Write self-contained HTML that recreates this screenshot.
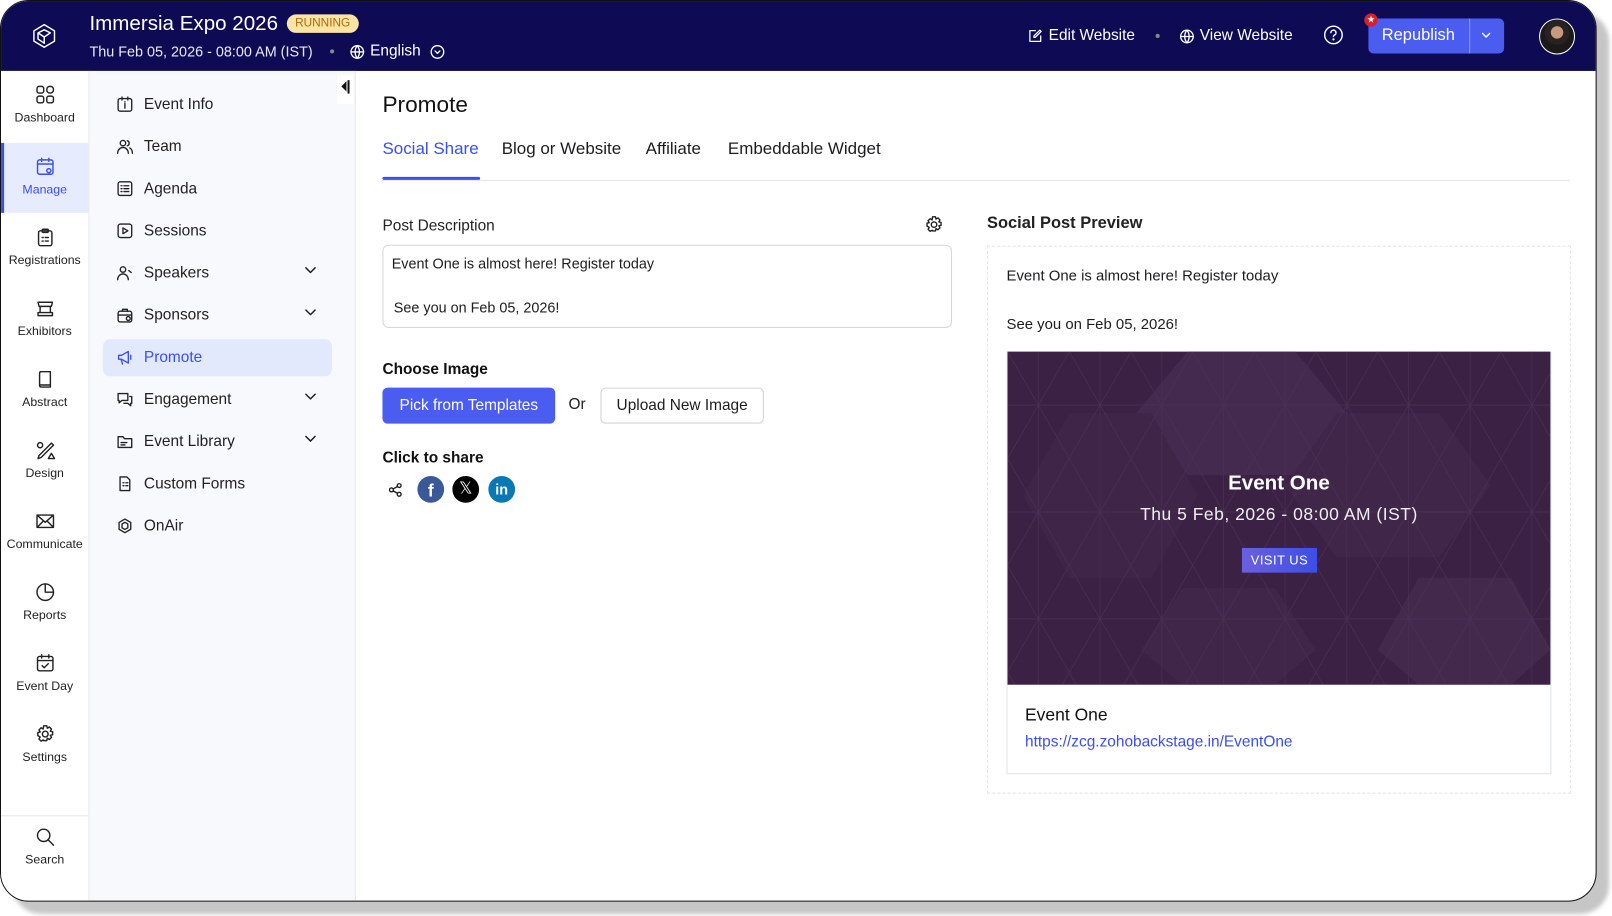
<!DOCTYPE html>
<html><head><meta charset="utf-8"><style>
*{box-sizing:border-box;margin:0;padding:0}
body{width:1612px;height:916px;background:#fff;overflow:hidden;font-family:"Liberation Sans",sans-serif;color:#1d1d1f}
#s{position:absolute;left:0;top:0;width:1568px;height:891px;transform:scale(1.0281);transform-origin:0 0}
.shadow{position:absolute;left:12px;top:12px;width:1553px;height:877px;background:#c6c6c6;border-radius:28px;filter:blur(2px)}
.win{position:absolute;left:0;top:0;width:1553px;height:877px;background:#fff;border:1.5px solid #111;border-radius:28px;overflow:hidden}
.hdr{position:absolute;left:0;top:0;right:0;height:68px;background:#0e0b54;color:#fff}
.a{position:absolute}
.rail{position:absolute;left:0;top:68px;width:86px;bottom:0;background:#fff;border-right:1px solid #e8e9ee}
.ri{position:absolute;left:0;width:85px;height:69px;text-align:center;font-size:12px;color:#222}
.ri svg{display:block;margin:13px auto 5px}
.sub{position:absolute;left:86px;top:68px;width:259px;bottom:0;background:#f8f9fc;border-right:1px solid #e4e6eb}
.si{position:absolute;left:26px;font-size:15px;color:#222;display:flex;align-items:center;gap:10px}
.si svg{width:17px;height:17px}
.chev{position:absolute;left:209px}
svg{fill:none;stroke:currentColor;stroke-width:1.4;stroke-linecap:round;stroke-linejoin:round}
.tab{position:absolute;top:135px;font-size:16.5px}
</style></head><body><div id="s">
<div class="shadow"></div>
<div class="win">
<div class="hdr">
 <svg class="a" style="left:28px;top:20px" width="28" height="28" viewBox="0 0 28 28" stroke="#fff" stroke-width="2"><path d="M14 3 24 9v10l-10 6-10-6V9z"/><path d="M8 11l6-3 6 3-6 4-6-4v6l6 4"/><path d="M14 15v6"/></svg>
 <div class="a" style="left:86px;top:11px;font-size:20px">Immersia Expo 2026</div>
 <div class="a" style="left:278px;top:13px;background:#fbe4a4;color:#b06a0a;font-size:11.5px;padding:3px 8px;border-radius:10px">RUNNING</div>
 <div class="a" style="left:86px;top:41px;font-size:14px;color:#e8e8f4">Thu Feb 05, 2026 - 08:00 AM (IST)</div>
 <div class="a" style="left:320px;top:47px;width:4px;height:4px;border-radius:2px;background:#888"></div>
 <svg class="a" style="left:339px;top:42px" width="15" height="15" viewBox="0 0 16 16" stroke="#fff"><circle cx="8" cy="8" r="6.5"/><path d="M1.5 8h13M8 1.5c-3 3.5-3 9.5 0 13M8 1.5c3 3.5 3 9.5 0 13"/></svg>
 <div class="a" style="left:359px;top:40px;font-size:15px">English</div>
 <svg class="a" style="left:417px;top:42px" width="15" height="15" viewBox="0 0 16 16" stroke="#fff"><circle cx="8" cy="8" r="6.5"/><path d="M5.5 7l2.5 2.5L10.5 7"/></svg>
 <svg class="a" style="left:999px;top:27px" width="14" height="14" viewBox="0 0 16 16" stroke="#fff"><path d="M8 2H2v12h12V8"/><path d="M13 1.5l1.5 1.5L8 9.5H6.5V8z"/></svg>
 <div class="a" style="left:1019px;top:25px;font-size:15px">Edit Website</div>
 <div class="a" style="left:1123px;top:32px;width:4px;height:4px;border-radius:2px;background:#888"></div>
 <svg class="a" style="left:1146px;top:27px" width="15" height="15" viewBox="0 0 16 16" stroke="#fff"><circle cx="8" cy="8" r="6.5"/><path d="M1.5 8h13M8 1.5c-3 3.5-3 9.5 0 13M8 1.5c3 3.5 3 9.5 0 13"/></svg>
 <div class="a" style="left:1166px;top:25px;font-size:15px">View Website</div>
 <svg class="a" style="left:1286px;top:23px" width="20" height="20" viewBox="0 0 20 20" stroke="#fff"><circle cx="10" cy="10" r="8.5"/><path d="M7.5 7.8a2.5 2.5 0 1 1 3.3 2.4c-.6.3-.8.7-.8 1.4"/><circle cx="10" cy="14.3" r=".4" fill="#fff"/></svg>
 <div class="a" style="left:1330px;top:17px;width:132px;height:34px;background:#4b5cf0;border-radius:5px"></div>
 <div class="a" style="left:1428px;top:17px;width:1px;height:34px;background:#8d98f6"></div>
 <div class="a" style="left:1343px;top:25px;font-size:16px">Republish</div>
 <svg class="a" style="left:1439px;top:29px" width="11" height="8" viewBox="0 0 11 8" stroke="#fff"><path d="M2 2.5l3.5 3.5 3.5-3.5"/></svg>
 <div class="a" style="left:1326px;top:12px;width:13px;height:13px;border-radius:7px;background:#d91f2a;color:#fff;font-size:9px;text-align:center;line-height:13px">★</div>
 <div class="a" style="left:1496px;top:17px;width:35px;height:35px;border-radius:50%;background:radial-gradient(circle at 50% 38%,#c79a80 0 22%,#2a2220 24% 45%,#1a1a1a 46%);border:1.5px solid #fff"></div>
</div>

<div class="rail">
 <div class="ri" style="top:0"><svg width="20" height="20" viewBox="0 0 20 20"><rect x="2" y="2" width="6.5" height="6.5" rx="2"/><rect x="11.5" y="2" width="6.5" height="6.5" rx="3"/><rect x="2" y="11.5" width="6.5" height="6.5" rx="2"/><rect x="11.5" y="11.5" width="6.5" height="6.5" rx="2"/></svg>Dashboard</div>
 <div class="ri" style="top:70px;background:#e6ebfd;color:#3b4ef0;height:68px"><div class="a" style="left:0;top:0;width:3px;height:68px;background:#3b4ef0"></div><svg width="20" height="20" viewBox="0 0 20 20"><rect x="2.5" y="3.5" width="15" height="14" rx="2"/><path d="M2.5 7.5h15M6.5 2v3M13.5 2v3"/><circle cx="13.5" cy="14" r="2"/></svg>Manage</div>
 <div class="ri" style="top:139px"><svg width="20" height="20" viewBox="0 0 20 20"><rect x="3.5" y="3.5" width="13" height="14.5" rx="2"/><rect x="7" y="2" width="6" height="3" rx="1"/><path d="M7 10h1M10 10h3M7 13.5h1M10 13.5h3"/></svg>Registrations</div>
 <div class="ri" style="top:208px"><svg width="20" height="20" viewBox="0 0 20 20"><path d="M3 4h14l-1 4H4zM5 8v6M15 8v6M3 14h14v3H3z"/></svg>Exhibitors</div>
 <div class="ri" style="top:277px"><svg width="20" height="20" viewBox="0 0 20 20"><path d="M5 2.5h10v15H6a1.5 1.5 0 0 1-1.5-1.5V4A1.5 1.5 0 0 1 6 2.5zM4.5 15.5h10"/></svg>Abstract</div>
 <div class="ri" style="top:346px"><svg width="20" height="20" viewBox="0 0 20 20"><circle cx="5" cy="5" r="2.5"/><path d="M16 3 4 15l-1 3 3-1L18 5zM13 18l3-5 3 5z"/></svg>Design</div>
 <div class="ri" style="top:415px"><svg width="20" height="20" viewBox="0 0 20 20"><rect x="2" y="4" width="16" height="12" rx="1"/><path d="M2 4l8 7 8-7M2 16l6-6M18 16l-6-6"/></svg>Communicate</div>
 <div class="ri" style="top:484px"><svg width="20" height="20" viewBox="0 0 20 20"><circle cx="10" cy="10" r="8"/><path d="M10 2v8h8"/></svg>Reports</div>
 <div class="ri" style="top:553px"><svg width="20" height="20" viewBox="0 0 20 20"><rect x="2.5" y="3.5" width="15" height="14" rx="2"/><path d="M2.5 7.5h15M6.5 2v3M13.5 2v3M7 12.5l2 2 4-4"/></svg>Event Day</div>
 <div class="ri" style="top:622px"><svg width="20" height="20" viewBox="0 0 20 20"><circle cx="10" cy="10" r="2.8"/><path d="M8.5 2h3l.5 2.3 2-1.2 2.1 2.1-1.2 2 2.3.5v3l-2.3.5 1.2 2-2.1 2.1-2-1.2-.5 2.3h-3L8 15.7l-2 1.2-2.1-2.1 1.2-2L2.8 11.5v-3L5.1 8 3.9 6l2.1-2.1 2 1.2z"/></svg>Settings</div>
 <div class="a" style="left:0;top:724px;width:85px;height:1px;background:#e6e6ea"></div>
 <div class="ri" style="top:722px"><svg width="20" height="20" viewBox="0 0 20 20"><circle cx="8.5" cy="8.5" r="6"/><path d="M13 13l5 5"/></svg>Search</div>
</div>

<div class="sub">
 <div class="a" style="left:241px;top:4px;width:16px;height:28px;background:#fff"></div>
 <div class="a" style="left:245px;top:10px;width:0;height:0;border-top:5px solid transparent;border-bottom:5px solid transparent;border-right:5px solid #111"></div>
 <div class="a" style="left:251px;top:9px;width:1.5px;height:13px;background:#111"></div>
 <div class="a" style="left:13px;top:261px;width:223px;height:36px;background:#e3e9fd;border-radius:7px"></div>
 <div class="si" style="top:24px"><svg viewBox="0 0 18 18"><rect x="2" y="3" width="14" height="13" rx="2"/><path d="M6 1.5v3M12 1.5v3M9 8v5M9 6.3v.1"/></svg>Event Info</div>
 <div class="si" style="top:65px"><svg viewBox="0 0 18 18"><circle cx="7" cy="5.5" r="2.8"/><path d="M1.5 16c0-3.5 2.5-6 5.5-6s5.5 2.5 5.5 6M11.5 3a2.8 2.8 0 0 1 0 5.3M14 10.5c1.7.9 2.7 3 2.7 5.5"/></svg>Team</div>
 <div class="si" style="top:106px"><svg viewBox="0 0 18 18"><rect x="2" y="2" width="14" height="14" rx="2"/><path d="M5 6h1M8 6h5M5 9h1M8 9h5M5 12h1M8 12h5"/></svg>Agenda</div>
 <div class="si" style="top:147px"><svg viewBox="0 0 18 18"><rect x="2" y="2" width="14" height="14" rx="2.5"/><path d="M7 6v6l5-3z"/></svg>Sessions</div>
 <div class="si" style="top:188px"><svg viewBox="0 0 18 18"><circle cx="7" cy="5.5" r="2.8"/><path d="M1.5 16c0-3.5 2.5-6 5.5-6s5.5 2.5 5.5 6M13 6.5l2.5 2"/></svg>Speakers</div>
 <div class="si" style="top:229px"><svg viewBox="0 0 18 18"><rect x="2" y="5" width="14" height="11" rx="2"/><path d="M6.5 5V3h5v2M2 9h14"/><circle cx="12.5" cy="12.5" r="2"/></svg>Sponsors</div>
 <div class="si" style="top:270px;color:#3b4ef0"><svg viewBox="0 0 18 18"><path d="M2.5 7h3l7-4v12l-7-4h-3zM5 11l1.5 5M15 7v4"/></svg>Promote</div>
 <div class="si" style="top:311px"><svg viewBox="0 0 18 18"><path d="M2 3h10v7H6l-3 2.5V10H2zM14 6h2v7h-1v2.5L12 13H8"/></svg>Engagement</div>
 <div class="si" style="top:352px"><svg viewBox="0 0 18 18"><path d="M2 4h5l1.5 2H16v9H2zM5 10h6M5 12.5h4"/></svg>Event Library</div>
 <div class="si" style="top:393px"><svg viewBox="0 0 18 18"><path d="M4 2h7l3 3v11H4zM7 8h1M10 8h2M7 11h1M10 11h2"/></svg>Custom Forms</div>
 <div class="si" style="top:434px"><svg viewBox="0 0 18 18"><path d="M9 2l6 3.5v7L9 16l-6-3.5v-7z"/><path d="M6 7l3-1.7L12 7v4l-3 1.7L6 11z"/></svg>OnAir</div>
 <svg class="chev a" style="top:190px" width="12" height="8" viewBox="0 0 12 8"><path d="M1.5 1.5l4.5 4.5 4.5-4.5"/></svg>
 <svg class="chev a" style="top:231px" width="12" height="8" viewBox="0 0 12 8"><path d="M1.5 1.5l4.5 4.5 4.5-4.5"/></svg>
 <svg class="chev a" style="top:313px" width="12" height="8" viewBox="0 0 12 8"><path d="M1.5 1.5l4.5 4.5 4.5-4.5"/></svg>
 <svg class="chev a" style="top:354px" width="12" height="8" viewBox="0 0 12 8"><path d="M1.5 1.5l4.5 4.5 4.5-4.5"/></svg>
</div>

<!-- main -->
<div class="a" style="left:371px;top:88px;font-size:22px;color:#111">Promote</div>
<div class="tab" style="left:371px;color:#3b4ef0">Social Share</div>
<div class="tab" style="left:487px">Blog or Website</div>
<div class="tab" style="left:627px">Affiliate</div>
<div class="tab" style="left:707px">Embeddable Widget</div>
<div class="a" style="left:371px;top:174px;width:1155px;height:1px;background:#e3e5ea"></div>
<div class="a" style="left:371px;top:171px;width:95px;height:3px;background:#3b4ef0;border-radius:2px"></div>

<div class="a" style="left:371px;top:210px;font-size:15px;color:#222">Post Description</div>
<svg class="a" style="left:898px;top:208px" width="19" height="19" viewBox="0 0 20 20"><circle cx="10" cy="10" r="2.8"/><path d="M8.5 2h3l.5 2.3 2-1.2 2.1 2.1-1.2 2 2.3.5v3l-2.3.5 1.2 2-2.1 2.1-2-1.2-.5 2.3h-3L8 15.7l-2 1.2-2.1-2.1 1.2-2L2.8 11.5v-3L5.1 8 3.9 6l2.1-2.1 2 1.2z"/></svg>
<div class="a" style="left:371px;top:237px;width:554px;height:81px;border:1px solid #d3d7de;border-radius:6px"></div>
<div class="a" style="left:380px;top:247px;font-size:14px">Event One is almost here! Register today</div>
<div class="a" style="left:382px;top:290px;font-size:14px">See you on Feb 05, 2026!</div>

<div class="a" style="left:371px;top:350px;font-size:15px;font-weight:bold;color:#111">Choose Image</div>
<div class="a" style="left:371px;top:376px;width:168px;height:35px;background:#4b5cf0;border-radius:5px;color:#fff;font-size:15px;text-align:center;line-height:35px">Pick from Templates</div>
<div class="a" style="left:552px;top:384px;font-size:15px">Or</div>
<div class="a" style="left:583px;top:376px;width:159px;height:35px;border:1px solid #cfd3da;border-radius:5px;font-size:15px;text-align:center;line-height:33px">Upload New Image</div>
<div class="a" style="left:371px;top:436px;font-size:15px;font-weight:bold;color:#111">Click to share</div>
<svg class="a" style="left:376px;top:468px" width="15" height="15" viewBox="0 0 16 16"><circle cx="4" cy="8" r="2"/><circle cx="12" cy="3.5" r="2"/><circle cx="12" cy="12.5" r="2"/><path d="M5.8 7 10.2 4.5M5.8 9l4.4 2.5"/></svg>
<div class="a" style="left:405px;top:462px;width:26px;height:26px;border-radius:50%;background:#3b5998;color:#fff;font-weight:bold;font-size:17px;text-align:center;line-height:29px">f</div>
<div class="a" style="left:439px;top:462px;width:26px;height:26px;border-radius:50%;background:#000;color:#fff;font-size:16px;text-align:center;line-height:26px">𝕏</div>
<div class="a" style="left:474px;top:462px;width:26px;height:26px;border-radius:50%;background:#0a78b5;color:#fff;font-weight:bold;font-size:14px;text-align:center;line-height:27px">in</div>

<div class="a" style="left:959px;top:208px;font-size:16px;font-weight:bold;color:#222">Social Post Preview</div>
<div class="a" style="left:959px;top:238px;width:568px;height:533px;border:1.5px dashed #e3e5e9"></div>
<div class="a" style="left:978px;top:260px;font-size:14.5px">Event One is almost here! Register today</div>
<div class="a" style="left:978px;top:307px;font-size:14.5px">See you on Feb 05, 2026!</div>
<div class="a" style="left:978px;top:341px;width:530px;height:411px;border:1.5px solid #dfe3e8;border-top:0"></div>
<div class="a" style="left:979px;top:341px;width:528px;height:324px;background:#3b2144;overflow:hidden">
 <svg width="528" height="324" style="position:absolute;left:0;top:0;stroke:none">
  <defs><pattern id="p" width="60" height="104" patternUnits="userSpaceOnUse"><path d="M0 0l60 104M60 0L0 104M0 52h60M30 0v104" stroke="#4a2f54" stroke-width=".7"/></pattern></defs>
  <polygon points="175,0 280,0 330,60 280,120 175,120 125,60" fill="#442a4e"/>
  <polygon points="320,60 420,60 470,130 420,200 320,200 270,130" fill="#402649"/>
  <polygon points="60,60 140,60 185,140 140,220 60,220 15,140" fill="#3f2548"/>
  <polygon points="400,220 490,220 528,290 490,324 400,324 360,290" fill="#432a4d"/>
  <polygon points="170,230 260,230 300,290 260,324 170,324 130,290" fill="#402649"/>
  <rect width="528" height="324" fill="url(#p)"/>
 </svg>
 <div class="a" style="left:0;width:528px;top:117px;text-align:center;color:#fff;font-size:20px;font-weight:bold">Event One</div>
 <div class="a" style="left:0;width:528px;top:149px;text-align:center;color:#f1eef3;font-size:17px;letter-spacing:.5px">Thu 5 Feb, 2026 - 08:00 AM (IST)</div>
 <div class="a" style="left:228px;top:191px;width:73px;height:24px;background:linear-gradient(90deg,#6b5fe0,#3d4ee6);color:#fff;font-size:12.5px;text-align:center;line-height:24px;letter-spacing:.5px">VISIT US</div>
</div>
<div class="a" style="left:996px;top:685px;font-size:17px;color:#111">Event One</div>
<div class="a" style="left:996px;top:712px;font-size:15px;color:#3b4ef0">https://zcg.zohobackstage.in/EventOne</div>
</div>
</div></body></html>
